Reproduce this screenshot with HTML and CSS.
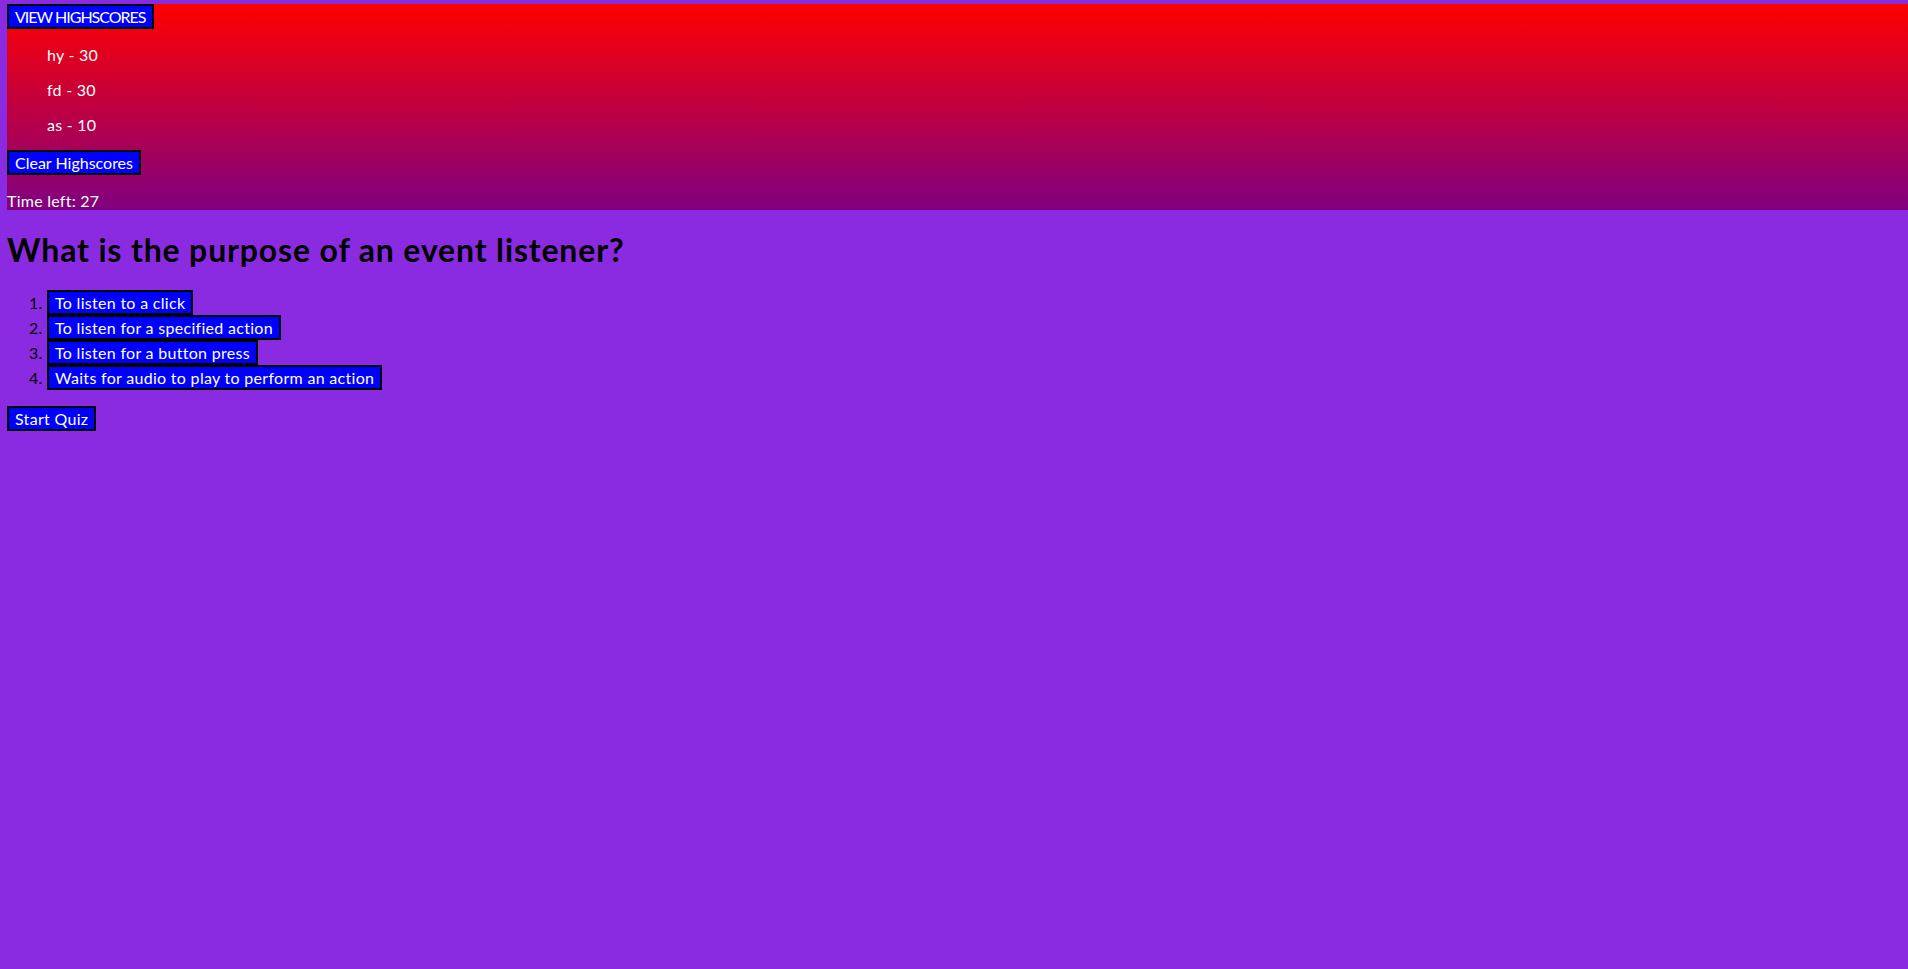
FILE: index.html
```html
<!DOCTYPE html>
<html lang="en">
<head>
<meta charset="utf-8">
<title>Code Quiz</title>
<link rel="stylesheet" href="styles.css">
</head>
<body>
<div class="top">
<button class="btn btn-caps">VIEW HIGHSCORES</button>
<ul class="scores">
<li>hy - 30</li>
<li>fd - 30</li>
<li>as - 10</li>
</ul>
<button class="btn btn-tight">Clear Highscores</button>
<p class="timer">Time left: 27</p>
</div>
<h1 class="question">What is the purpose of an event listener?</h1>
<ol class="answers">
<li><button class="btn">To listen to a click</button></li>
<li><button class="btn">To listen for a specified action</button></li>
<li><button class="btn">To listen for a button press</button></li>
<li><button class="btn">Waits for audio to play to perform an action</button></li>
</ol>
<button class="btn">Start Quiz</button>
</body>
</html>
```
FILE: styles.css
```css
html, body {
  height: 100%;
}
body {
  margin: 0;
  padding: 4px 0 0 7px;
  box-sizing: border-box;
  background: #8a2be2;
  font-family: Lato, "Liberation Sans", sans-serif;
  font-size: 16px;
  line-height: 19px;
  letter-spacing: 0.25px;
  color: #000;
}
.top {
  background: linear-gradient(#ff0000, #800080);
  color: #fff;
}
.btn {
  font-family: inherit;
  font-size: 16px;
  line-height: 19px;
  letter-spacing: 0.3px;
  color: #fff;
  background: #0000ff;
  border: 2px solid #000;
  padding: 1px 6px;
  margin: 0;
  border-radius: 0;
}
.btn-caps {
  letter-spacing: -1px;
}
.btn-tight {
  letter-spacing: 0;
}
.scores {
  list-style: none;
  margin: 16px 0;
  padding: 0 0 0 40px;
}
.scores li {
  margin: 16px 0;
}
.timer {
  margin: 16px 0;
}
.question {
  font-size: 32px;
  line-height: 37px;
  font-weight: bold;
  letter-spacing: 0.85px;
  margin: 21.44px 0;
}
.answers {
  margin: 21.44px 0 16px;
  padding-left: 40px;
}
```
